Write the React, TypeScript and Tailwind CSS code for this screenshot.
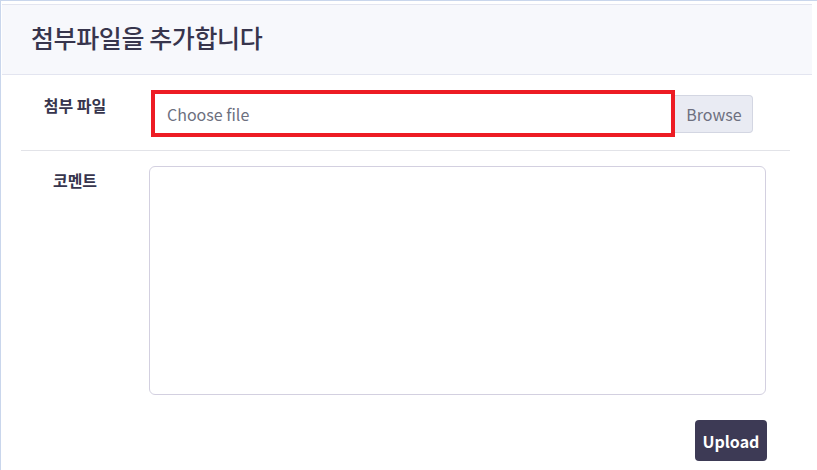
export default function App() {
  return (
    <div
      className="w-[817px] h-[470px] overflow-hidden bg-white border-l border-t border-[#c9d6ec]"
      style={{ fontFamily: '"Noto Sans CJK KR", "Noto Sans", sans-serif' }}
    >
      <div className="ml-px mt-[3px] w-[810px]">
        {/* header */}
        <div className="h-[71px] bg-[#f7f8fc] border-t border-b border-[#e3e5f0] pl-[29px] flex items-center">
          <h1 className="text-[25px] font-medium text-[#37354d] tracking-[-0.4px] pb-[3px]">
            첨부파일을 추가합니다
          </h1>
        </div>

        <div className="ml-[19px] w-[769px]">
          {/* file row */}
          <div className="flex items-start pt-[15px] pb-[13px] border-b border-[#e2e3e8]">
            <div className="w-[108px] text-center pt-[3px] text-[16px] font-bold text-[#37354d]">
              첨부 파일
            </div>
            <div className="ml-[22px] flex items-center">
              <div className="border-4 border-[#ed1c24] w-[524px] h-[47px] bg-white flex items-center pl-[12px]">
                <span className="text-[16px] text-[#6d7080]">Choose file</span>
              </div>
              <button className="h-[38px] w-[78px] bg-[#e9ebf3] border border-l-0 border-[#d3d6e2] rounded-r-[4px] text-[16px] text-[#6d7080] pl-px">
                Browse
              </button>
            </div>
          </div>

          {/* comment row */}
          <div className="flex items-start pt-[15px]">
            <div className="w-[108px] text-center pt-[2px] text-[16px] font-bold text-[#37354d]">
              코멘트
            </div>
            <div className="ml-[20px] w-[617px] flex flex-col items-end">
              <textarea className="w-[617px] h-[229px] border border-[#d3d0e0] rounded-[6px] resize-none outline-none" />
              <button className="mt-[25px] mr-[-1px] h-[41px] w-[72px] bg-[#3d3a55] rounded-[4px] text-white text-[16px] font-bold">
                Upload
              </button>
            </div>
          </div>
        </div>
      </div>
    </div>
  );
}
